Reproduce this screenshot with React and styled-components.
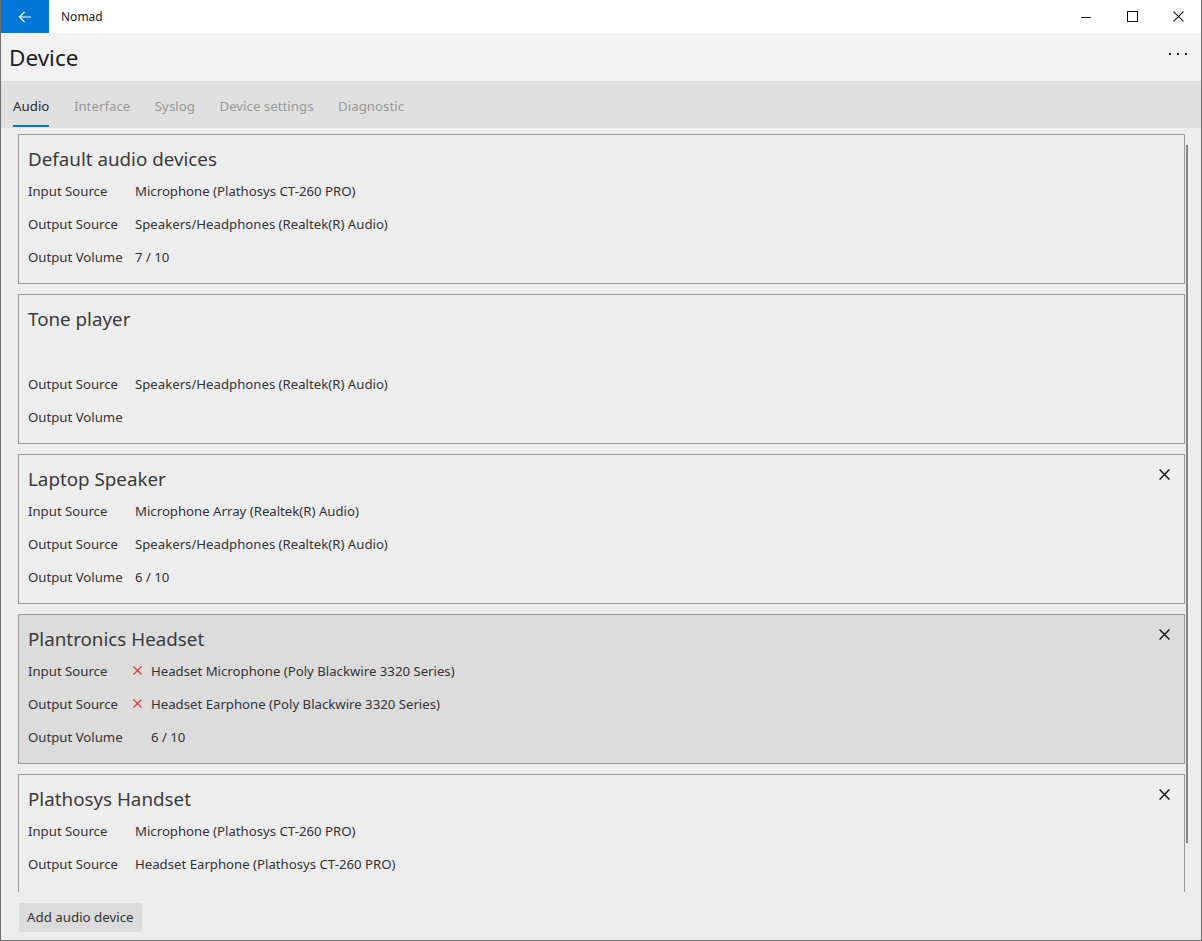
import React from 'react';
import styled, { createGlobalStyle } from 'styled-components';

const GlobalStyle = createGlobalStyle`
  html, body {
    margin: 0;
    padding: 0;
    background: #ededed;
  }
  body {
    font-family: "Segoe UI", "Noto Sans", "Open Sans", sans-serif;
    color: #333;
  }
`;

const Window = styled.div`
  width: 1202px;
  height: 941px;
  box-sizing: border-box;
  border: 1px solid #6f6f6f;
  border-top: none;
  display: flex;
  flex-direction: column;
  background: #ededed;
  overflow: hidden;
`;

const TitleBar = styled.div`
  height: 33px;
  display: flex;
  align-items: center;
  background: #fff;
  flex-shrink: 0;
`;

const BackButton = styled.div`
  width: 48px;
  height: 33px;
  background: #0078d7;
  display: flex;
  align-items: center;
  justify-content: center;
`;

const AppName = styled.span`
  font-size: 12px;
  margin-left: 12px;
  color: #222;
  flex: 1;
`;

const WinButton = styled.div`
  width: 46px;
  height: 33px;
  display: flex;
  align-items: center;
  justify-content: center;
`;

const Header = styled.div`
  height: 48px;
  background: #f2f2f2;
  display: flex;
  align-items: center;
  justify-content: space-between;
  padding: 0 14px 0 8px;
  flex-shrink: 0;
`;

const PageTitle = styled.h1`
  margin: 0;
  font-size: 22.5px;
  font-weight: 400;
  color: #222;
`;

const MoreDots = styled.div`
  display: flex;
  gap: 6px;
  margin-bottom: 6px;
  span {
    width: 2px;
    height: 2px;
    background: #222;
  }
`;

const TabBar = styled.div`
  height: 47px;
  background: #e0e0e0;
  display: flex;
  gap: 24.5px;
  padding-left: 12px;
  flex-shrink: 0;
`;

const Tab = styled.div`
  position: relative;
  display: flex;
  align-items: center;
  padding-top: 2px;
  font-size: 13.3px;
  color: ${(p) => (p.active ? '#2b2b2b' : '#999')};
  &::after {
    content: '';
    display: ${(p) => (p.active ? 'block' : 'none')};
    position: absolute;
    left: 0;
    right: 0;
    bottom: 1px;
    height: 2px;
    background: #0078d7;
  }
`;

const ScrollArea = styled.div`
  flex: 1;
  display: flex;
  overflow: hidden;
  padding: 6px 0 0 17px;
  min-height: 0;
`;

const CardList = styled.div`
  width: 1167px;
  display: flex;
  flex-direction: column;
  gap: 10px;
`;

const ScrollBar = styled.div`
  width: 2px;
  height: 698px;
  margin: 11px 0 0 1px;
  background: #858585;
`;

const Card = styled.div`
  position: relative;
  flex-shrink: 0;
  height: 150px;
  box-sizing: border-box;
  border: 1px solid #9a9a9a;
  background: ${(p) => (p.highlight ? '#dcdcdc' : '#ededed')};
  padding: 10px 9px 0;
`;

const CardTitle = styled.div`
  font-size: 18.8px;
  line-height: 28px;
  color: #3a3a3a;
  margin-bottom: 2px;
`;

const Row = styled.div`
  display: grid;
  grid-template-columns: ${(p) => (p.withIcon ? '105px 18px' : '107px 0')} 1fr;
  align-items: center;
  height: 33px;
  font-size: 13.2px;
  color: #333;
  margin-top: -1px;
  margin-bottom: 1px;
`;

const IconCell = styled.span`
  display: flex;
  align-items: center;
`;

const CloseButton = styled.div`
  position: absolute;
  top: 14px;
  right: 14px;
  width: 11px;
  height: 11px;
  display: flex;
`;

const Footer = styled.div`
  height: 48px;
  flex-shrink: 0;
  display: flex;
  align-items: center;
  padding-left: 18px;
`;

const Button = styled.div`
  height: 29px;
  padding: 0 8px;
  display: flex;
  align-items: center;
  background: #dcdcdc;
  border-radius: 2px;
  font-size: 13.3px;
  color: #333;
  margin-top: 2px;
`;

const CrossIcon = ({ size = 10, color = '#111', width = 1.1 }) => (
  <svg width={size} height={size} viewBox="0 0 10 10">
    <path d="M0.5 0.5 L9.5 9.5 M9.5 0.5 L0.5 9.5" stroke={color} strokeWidth={width} fill="none" />
  </svg>
);

const cards = [
  {
    title: 'Default audio devices',
    rows: [
      ['Input Source', 'Microphone (Plathosys CT-260 PRO)'],
      ['Output Source', 'Speakers/Headphones (Realtek(R) Audio)'],
      ['Output Volume', '7 / 10'],
    ],
  },
  {
    title: 'Tone player',
    rows: [
      ['', ''],
      ['Output Source', 'Speakers/Headphones (Realtek(R) Audio)'],
      ['Output Volume', ''],
    ],
  },
  {
    title: 'Laptop Speaker',
    closable: true,
    rows: [
      ['Input Source', 'Microphone Array (Realtek(R) Audio)'],
      ['Output Source', 'Speakers/Headphones (Realtek(R) Audio)'],
      ['Output Volume', '6 / 10'],
    ],
  },
  {
    title: 'Plantronics Headset',
    closable: true,
    highlight: true,
    withIcon: true,
    rows: [
      ['Input Source', 'Headset Microphone (Poly Blackwire 3320 Series)', true],
      ['Output Source', 'Headset Earphone (Poly Blackwire 3320 Series)', true],
      ['Output Volume', '6 / 10'],
    ],
  },
  {
    title: 'Plathosys Handset',
    closable: true,
    rows: [
      ['Input Source', 'Microphone (Plathosys CT-260 PRO)'],
      ['Output Source', 'Headset Earphone (Plathosys CT-260 PRO)'],
      ['Output Volume', '6 / 10'],
    ],
  },
];

const tabs = ['Audio', 'Interface', 'Syslog', 'Device settings', 'Diagnostic'];

const App = () => (
  <>
    <GlobalStyle />
    <Window>
      <TitleBar>
        <BackButton>
          <svg width="14" height="12" viewBox="0 0 14 12">
            <path d="M13 6 H1.5 M6.5 1 L1.5 6 L6.5 11" stroke="#fff" strokeWidth="1.2" fill="none" />
          </svg>
        </BackButton>
        <AppName>Nomad</AppName>
        <WinButton>
          <svg width="10" height="10" viewBox="0 0 10 10">
            <path d="M0 5.5 H10" stroke="#111" strokeWidth="1" />
          </svg>
        </WinButton>
        <WinButton>
          <svg width="11" height="11" viewBox="0 0 11 11">
            <rect x="0.5" y="0.5" width="10" height="10" stroke="#111" strokeWidth="1" fill="none" />
          </svg>
        </WinButton>
        <WinButton>
          <CrossIcon size={11} width={1} />
        </WinButton>
      </TitleBar>
      <Header>
        <PageTitle>Device</PageTitle>
        <MoreDots>
          <span />
          <span />
          <span />
        </MoreDots>
      </Header>
      <TabBar>
        {tabs.map((t, i) => (
          <Tab key={t} active={i === 0}>
            {t}
          </Tab>
        ))}
      </TabBar>
      <ScrollArea>
        <CardList>
          {cards.map((c) => (
            <Card key={c.title} highlight={c.highlight}>
              <CardTitle>{c.title}</CardTitle>
              {c.rows.map(([label, value, err], i) => (
                <Row key={i} withIcon={c.withIcon}>
                  <span>{label}</span>
                  <IconCell>{err && <CrossIcon size={9} color="#e0393e" width={1.4} />}</IconCell>
                  <span>{value}</span>
                </Row>
              ))}
              {c.closable && (
                <CloseButton>
                  <CrossIcon size={11} width={1.3} />
                </CloseButton>
              )}
            </Card>
          ))}
        </CardList>
        <ScrollBar />
      </ScrollArea>
      <Footer>
        <Button>Add audio device</Button>
      </Footer>
    </Window>
  </>
);

export default App;
